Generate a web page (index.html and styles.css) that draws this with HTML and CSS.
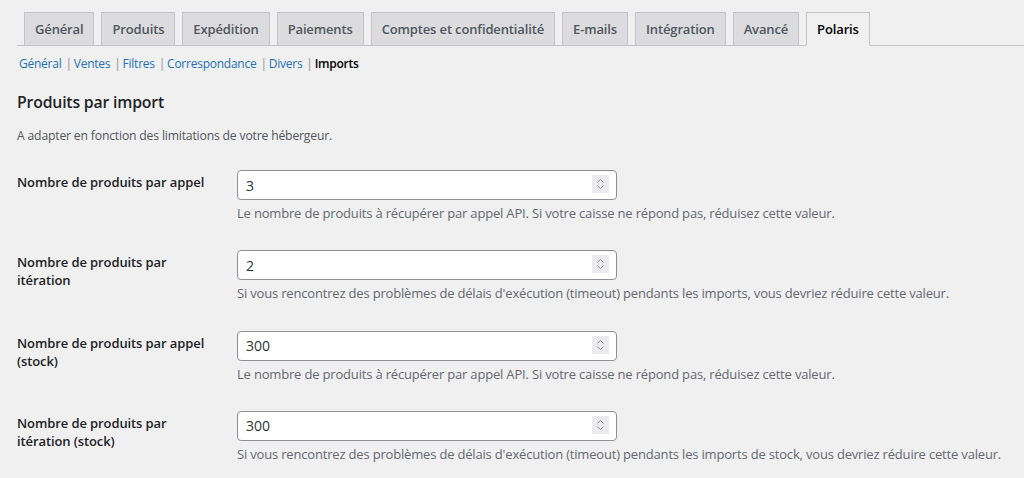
FILE: index.html
```html
<!DOCTYPE html>
<html lang="fr">
<head>
<meta charset="UTF-8" />
<title>Réglages Polaris</title>
<link rel="stylesheet" href="styles.css">
</head>
<body>

<div class="wrap">

  <!-- Main settings tabs -->
  <nav class="navTabs">
    <a class="navTab" href="#">Général</a>
    <a class="navTab" href="#">Produits</a>
    <a class="navTab" href="#">Expédition</a>
    <a class="navTab" href="#">Paiements</a>
    <a class="navTab" href="#">Comptes et confidentialité</a>
    <a class="navTab" href="#">E-mails</a>
    <a class="navTab" href="#">Intégration</a>
    <a class="navTab" href="#">Avancé</a>
    <a class="navTab active" href="#">Polaris</a>
  </nav>

  <!-- Section links -->
  <ul class="subNav">
    <li><a href="#">Général</a><span class="sep">|</span></li>
    <li><a href="#">Ventes</a><span class="sep">|</span></li>
    <li><a href="#">Filtres</a><span class="sep">|</span></li>
    <li><a href="#">Correspondance</a><span class="sep">|</span></li>
    <li><a href="#">Divers</a><span class="sep">|</span></li>
    <li><a href="#" class="current">Imports</a></li>
  </ul>

  <h2 class="sectionTitle">Produits par import</h2>
  <p class="sectionIntro">A adapter en fonction des limitations de votre hébergeur.</p>

  <div class="formTable">
    <div class="formRow">
      <label class="formLabel" for="perCall">Nombre de produits par appel</label>
      <div class="formField">
        <div class="numBox">
          <input class="numInput" id="perCall" type="text" value="3" />
          <span class="spinner"><svg width="17" height="18" viewBox="0 0 17 18"><path d="M5.5 7.5l3-3 3 3M5.5 10.5l3 3 3-3" fill="none" stroke="#909398" stroke-width="1"/></svg></span>
        </div>
        <p class="fieldDesc">Le nombre de produits à récupérer par appel API. Si votre caisse ne répond pas, réduisez cette valeur.</p>
      </div>
    </div>
    <div class="formRow">
      <label class="formLabel" for="perIteration">Nombre de produits par itération</label>
      <div class="formField">
        <div class="numBox">
          <input class="numInput" id="perIteration" type="text" value="2" />
          <span class="spinner"><svg width="17" height="18" viewBox="0 0 17 18"><path d="M5.5 7.5l3-3 3 3M5.5 10.5l3 3 3-3" fill="none" stroke="#909398" stroke-width="1"/></svg></span>
        </div>
        <p class="fieldDesc">Si vous rencontrez des problèmes de délais d'exécution (timeout) pendants les imports, vous devriez réduire cette valeur.</p>
      </div>
    </div>
    <div class="formRow">
      <label class="formLabel" for="perCallStock">Nombre de produits par appel (stock)</label>
      <div class="formField">
        <div class="numBox">
          <input class="numInput" id="perCallStock" type="text" value="300" />
          <span class="spinner"><svg width="17" height="18" viewBox="0 0 17 18"><path d="M5.5 7.5l3-3 3 3M5.5 10.5l3 3 3-3" fill="none" stroke="#909398" stroke-width="1"/></svg></span>
        </div>
        <p class="fieldDesc">Le nombre de produits à récupérer par appel API. Si votre caisse ne répond pas, réduisez cette valeur.</p>
      </div>
    </div>
    <div class="formRow">
      <label class="formLabel" for="perIterationStock">Nombre de produits par itération (stock)</label>
      <div class="formField">
        <div class="numBox">
          <input class="numInput" id="perIterationStock" type="text" value="300" />
          <span class="spinner"><svg width="17" height="18" viewBox="0 0 17 18"><path d="M5.5 7.5l3-3 3 3M5.5 10.5l3 3 3-3" fill="none" stroke="#909398" stroke-width="1"/></svg></span>
        </div>
        <p class="fieldDesc">Si vous rencontrez des problèmes de délais d'exécution (timeout) pendants les imports de stock, vous devriez réduire cette valeur.</p>
      </div>
    </div>
  </div>

</div>

</body>
</html>
```
FILE: styles.css
```css
/* Page */
body {
  margin: 0;
  background: #f0f0f1;
  color: #3c434a;
  font-family: "Open Sans", "Noto Sans", sans-serif;
  font-size: 13px;
  letter-spacing: -0.18px;
}

.wrap {
  padding: 12px 0 0 17px;
}

/* Main tabs */
.navTabs {
  display: flex;
  gap: 7px;
  padding-left: 7px;
  border-bottom: 1px solid #c3c4c7;
}

.navTab {
  display: block;
  margin-bottom: -1px;
  padding: 5px 10px;
  line-height: 22px;
  font-size: 13px;
  font-weight: 600;
  letter-spacing: -0.14px;
  color: #50575e;
  background: #dcdcde;
  border: 1px solid #c3c4c7;
  text-decoration: none;
}

.navTab.active {
  color: #000;
  background: #f0f0f1;
  border-bottom-color: #f0f0f1;
}

/* Section links */
.subNav {
  display: flex;
  list-style: none;
  margin: 9px 0 0 2px;
  padding: 0;
  font-size: 12px;
  letter-spacing: -0.25px;
  line-height: 18px;
}

.subNav a {
  color: #2271b1;
  text-decoration: none;
}

.subNav a.current {
  color: #000;
  font-weight: 600;
}

.subNav .sep {
  padding: 0 2px 0 4px;
  color: #8c8f94;
}

/* Section heading */
.sectionTitle {
  margin: 18px 0 0 0;
  font-size: 15.8px;
  font-weight: 600;
  line-height: 22px;
  color: #1d2327;
}

.sectionIntro {
  margin: 14px 0 0 0;
  font-size: 12.2px;
  line-height: 18px;
  color: #50575e;
}

/* Form rows */
.formTable {
  margin-top: 10px;
}

.formRow {
  display: flex;
  height: 80.3px;
}

.formLabel {
  width: 200px;
  margin-right: 20px;
  padding-top: 18px;
  font-size: 13px;
  font-weight: 600;
  letter-spacing: -0.1px;
  line-height: 18px;
  color: #1d2327;
}

.formField {
  padding-top: 15px;
}

.numBox {
  position: relative;
  width: 380px;
}

.numInput {
  display: block;
  box-sizing: border-box;
  width: 380px;
  height: 30px;
  margin: 0;
  padding: 0 8px;
  font-family: inherit;
  font-size: 14px;
  color: #2c3338;
  background: #fff;
  border: 1px solid #8c8f94;
  border-radius: 4px;
}

/* Fake number spinner sitting over the input */
.spinner {
  position: absolute;
  top: 5px;
  right: 8px;
  width: 17px;
  height: 18px;
  background: #ebebee;
}

.spinner svg {
  display: block;
}

.fieldDesc {
  margin: 4px 0 0 0;
  line-height: 18px;
  white-space: nowrap;
  color: #646970;
}
```
